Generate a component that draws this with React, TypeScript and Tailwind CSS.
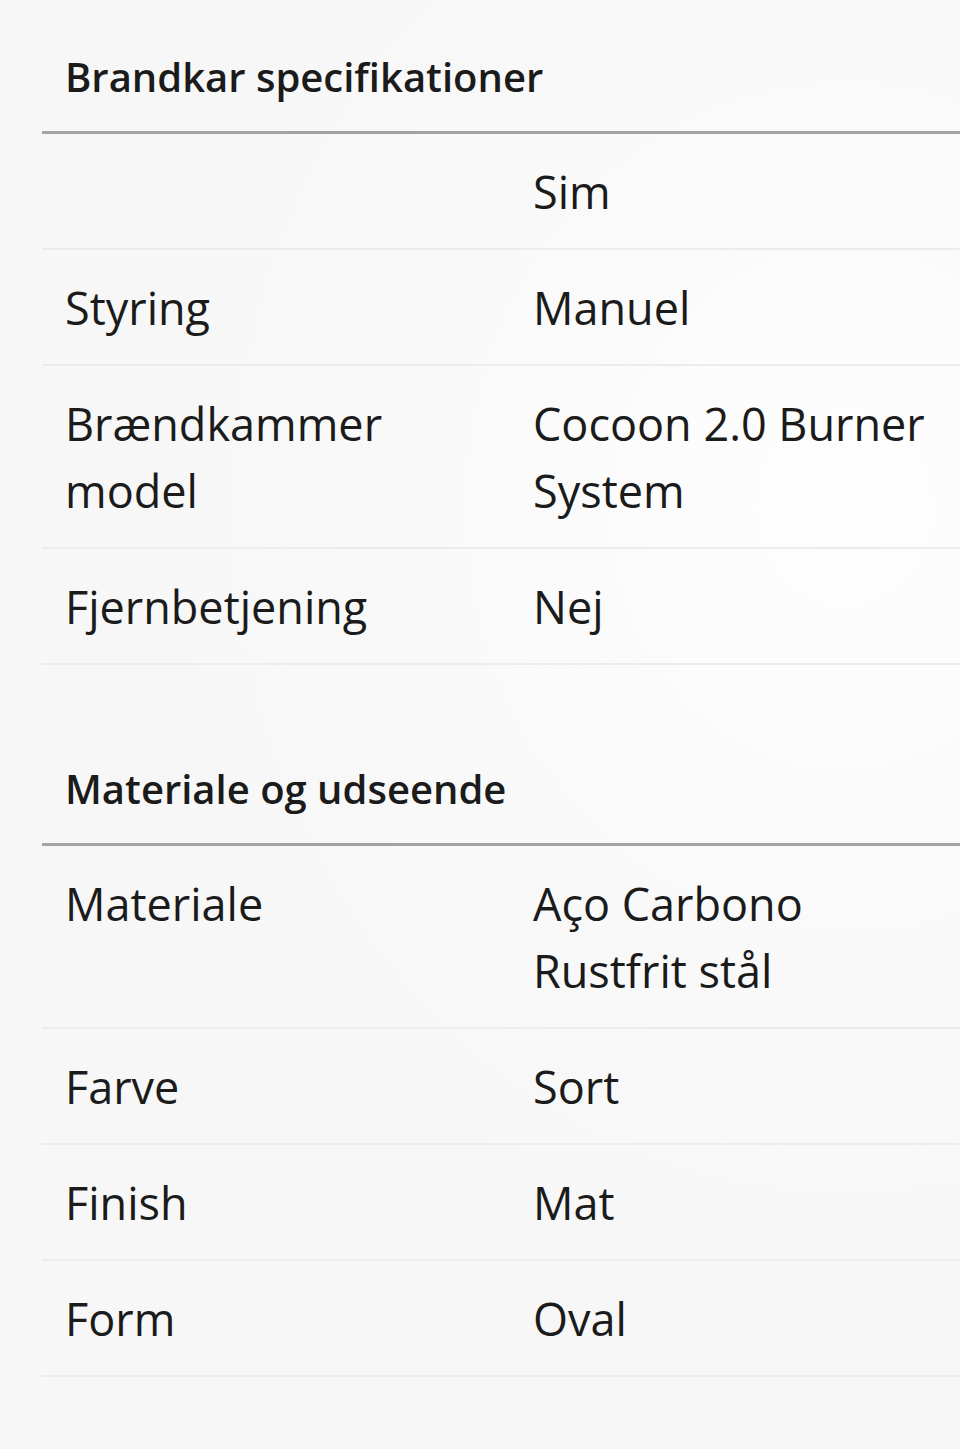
const sections = [
  {
    title: "Brandkar specifikationer",
    rows: [
      { label: "", value: "Sim" },
      { label: "Styring", value: "Manuel" },
      { label: "Brændkammer model", value: "Cocoon 2.0 Burner System" },
      { label: "Fjernbetjening", value: "Nej" },
    ],
  },
  {
    title: "Materiale og udseende",
    rows: [
      { label: "Materiale", value: "Aço Carbono Rustfrit stål" },
      { label: "Farve", value: "Sort" },
      { label: "Finish", value: "Mat" },
      { label: "Form", value: "Oval" },
    ],
  },
];

export default function App() {
  return (
    <div
      className="min-h-[1449px] w-[960px] overflow-hidden bg-[#f7f7f7] bg-[radial-gradient(ellipse_at_88%_35%,#fefefe_0%,#f9f9f9_35%,#f7f7f7_60%)] text-[#1b1b1b] pl-[42px]"
      style={{ fontFamily: '"Open Sans", "Noto Sans", sans-serif' }}
    >
      {sections.map((section, i) => (
        <section key={i} className={i > 0 ? "mt-[47px]" : ""}>
          {/* heading */}
          <h2 className="pl-[23px] pt-[52px] pb-[29px] text-[40px] leading-[50px] font-semibold border-b-[3px] border-[#a3a3a3]">
            {section.title}
          </h2>

          {section.rows.map((row, j) => (
            <div
              key={j}
              className="grid grid-cols-[491px_1fr] border-b-2 border-[#ececec] pt-[24px] pb-[23px] text-[45px] leading-[67px]"
            >
              <div className="pl-[23px] pr-[40px]">{row.label}</div>
              <div className="pr-[20px]">{row.value}</div>
            </div>
          ))}
        </section>
      ))}
    </div>
  );
}
